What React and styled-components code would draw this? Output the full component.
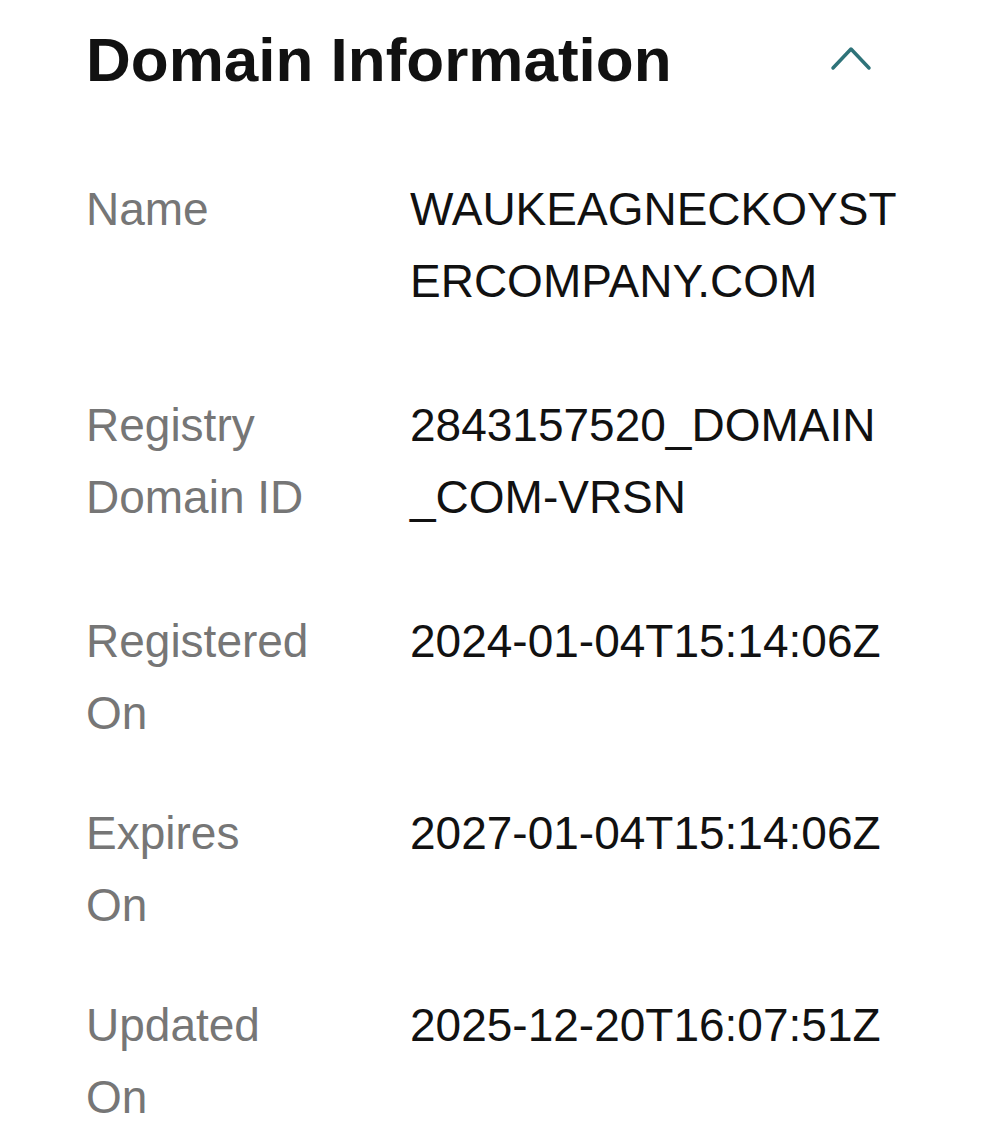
import React from 'react'
import styled, { createGlobalStyle } from 'styled-components'

const GlobalStyle = createGlobalStyle`
  body {
    margin: 0;
    background: #ffffff;
    font-family: "Liberation Sans", Arial, sans-serif;
  }
`

const rows = [
  { label: 'Name', value: 'WAUKEAGNECKOYSTERCOMPANY.COM' },
  { label: 'Registry Domain ID', value: '2843157520_DOMAIN_COM-VRSN' },
  { label: 'Registered On', value: '2024-01-04T15:14:06Z' },
  { label: 'Expires On', value: '2027-01-04T15:14:06Z' },
  { label: 'Updated On', value: '2025-12-20T16:07:51Z' },
]

const ChevronUp = () => (
  <svg width="42" height="26" viewBox="0 0 42 26" fill="none">
    <polyline
      points="3,23 21,4 39,23"
      stroke="#2e7379"
      strokeWidth="3.5"
      strokeLinecap="round"
      strokeLinejoin="round"
    />
  </svg>
)

const DomainInfo = () => {
  return (
    <Panel>
      <Header>
        <Title>Domain Information</Title>
        <Toggle aria-label="Collapse">
          <ChevronUp />
        </Toggle>
      </Header>
      <List>
        {rows.map((row) => (
          <Row key={row.label}>
            <Label>{row.label}</Label>
            <Value>{row.value}</Value>
          </Row>
        ))}
      </List>
    </Panel>
  )
}

export default function App() {
  return (
    <>
      <GlobalStyle />
      <DomainInfo />
    </>
  )
}

const Panel = styled.section`
  padding: 20px 0 0 86px;
  width: 991px;
  box-sizing: border-box;
`

const Header = styled.div`
  display: flex;
  align-items: center;
  justify-content: space-between;
  padding-right: 119px;
  height: 80px;
`

const Title = styled.h2`
  margin: 0;
  font-size: 62px;
  line-height: 80px;
  font-weight: 700;
  color: #111111;
`

const Toggle = styled.button`
  display: flex;
  padding: 0;
  margin-top: -4px;
  border: none;
  background: none;
`

const List = styled.dl`
  display: flex;
  flex-direction: column;
  gap: 48px;
  margin: 73px 0 0;
`

const Row = styled.div`
  display: grid;
  grid-template-columns: 324px 490px;
  font-size: 46px;
  line-height: 72px;
`

const Label = styled.dt`
  color: #767676;
  width: 224px;
`

const Value = styled.dd`
  margin: 0;
  padding-bottom: 24px;
  color: #111111;
  word-break: break-all;
`
